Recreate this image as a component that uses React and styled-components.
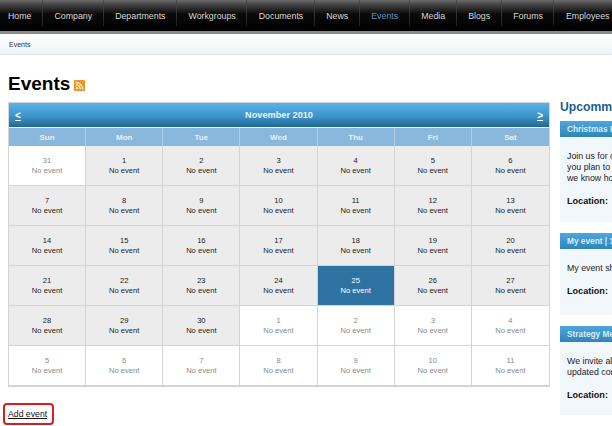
import React from 'react';
import styled, { createGlobalStyle } from 'styled-components';

const GlobalStyle = createGlobalStyle`
  html, body {
    margin: 0;
    padding: 0;
    width: 612px;
    height: 426px;
    overflow: hidden;
    background: #fff;
    font-family: "Liberation Sans", Arial, sans-serif;
  }
`;

const Page = styled.div`
  width: 612px;
  height: 426px;
  overflow: hidden;
`;

const NavBar = styled.nav`
  display: flex;
  height: 31px;
  background: linear-gradient(#6a6a6a 0, #3a3a3a 6px, #0a0a0a 14px, #000 100%);
  border-bottom: 3px solid #8c8c8c;
  white-space: nowrap;
`;

const NavItem = styled.a`
  display: flex;
  align-items: center;
  height: 31px;
  padding: 0 11.5px;
  font-size: 8.8px;
  color: ${(p) => (p.$active ? '#5f8fc4' : '#d8d8d8')};
  background: linear-gradient(#4c4c4c, #1c1c1c) right top / 1px 26px no-repeat;
  flex: none;

  &:first-child {
    padding-left: 8px;
  }
`;

const Breadcrumb = styled.div`
  box-sizing: border-box;
  height: 20px;
  margin-top: 1px;
  padding: 0 9px;
  display: flex;
  align-items: center;
  font-size: 7px;
  color: #333;
  background: linear-gradient(#fff, #eef2f4);
  border-bottom: 1px solid #dbe6ec;
`;

const Main = styled.div`
  display: flex;
  gap: 10px;
  padding: 0 0 0 8px;
`;

const Content = styled.div`
  flex: none;
  width: 542px;
`;

const Title = styled.h1`
  display: flex;
  align-items: center;
  gap: 4px;
  margin: 15px 0 4px;
  height: 28px;
  font-size: 19px;
  font-weight: bold;
  color: #000;
`;

const Calendar = styled.div`
  box-sizing: border-box;
  width: 542px;
  border: 1px solid #d4d4d4;
`;

const MonthBar = styled.div`
  display: flex;
  align-items: center;
  justify-content: space-between;
  height: 24px;
  padding: 0 6px;
  font-size: 9.2px;
  font-weight: bold;
  color: #e8f3fa;
  background: linear-gradient(#5cb2e6 0, #3d94c8 55%, #2a78a8 85%, #1f6690 100%);
`;

const Arrow = styled.a`
  font-size: 10px;
  text-decoration: underline;
  color: #fff;
`;

const Grid = styled.div`
  display: grid;
  grid-template-columns: repeat(7, 1fr);
`;

const DayName = styled.div`
  box-sizing: border-box;
  height: 18px;
  margin-top: 1px;
  display: flex;
  align-items: center;
  justify-content: center;
  font-size: 8px;
  font-weight: bold;
  color: #e4eff7;
  background: #8ab8dc;
  border-right: 1px solid #b4d0e6;

  &:nth-child(7) {
    border-right: none;
  }
`;

const Cell = styled.div`
  box-sizing: border-box;
  height: 40px;
  padding-top: 1px;
  display: flex;
  flex-direction: column;
  align-items: center;
  justify-content: center;
  line-height: 10px;
  font-size: 7.6px;
  border-bottom: 1px solid #d4d4d4;
  border-right: 1px solid #d4d4d4;
  background: ${(p) => (p.$today ? '#2f73a3' : p.$other ? '#fff' : '#ececec')};
  color: ${(p) => (p.$today ? '#fff' : p.$other ? '#8a8a8a' : '#1a1a1a')};

  &:nth-child(7n) {
    border-right: none;
  }
`;

const AddRow = styled.div`
  margin-top: 20px;
  line-height: 10px;
`;

const AddLink = styled.a`
  position: relative;
  font-size: 8.7px;
  color: #111;
  text-decoration: underline;

  &::after {
    content: '';
    position: absolute;
    left: -5px;
    right: -7px;
    top: -6px;
    bottom: -6px;
    border: 2px solid #dc1c24;
    border-radius: 4px;
  }
`;

const Sidebar = styled.aside`
  flex: none;
  width: 280px;
  padding-top: 45px;
`;

const SideTitle = styled.h2`
  margin: 0 0 7px;
  height: 14px;
  line-height: 14px;
  font-size: 12.2px;
  font-weight: bold;
  color: #1c5f8c;
  white-space: nowrap;
`;

const EventCard = styled.section`
  margin-bottom: 11px;
  background: #f2f7fb;
`;

const EventHead = styled.div`
  display: flex;
  align-items: center;
  height: 16px;
  padding: 0 7px;
  font-size: 8.3px;
  font-weight: bold;
  color: #d9ecf8;
  white-space: nowrap;
  background: linear-gradient(#4ea6dc, #2f85ba);
`;

const EventBody = styled.div`
  box-sizing: border-box;
  height: ${(p) => p.$h}px;
  padding: 14px 7px 0;
  font-size: 8.8px;
  line-height: 11px;
  color: #222;
  white-space: nowrap;
`;

const Location = styled.div`
  margin-top: 12px;
  font-size: 9.1px;
  font-weight: bold;
  color: #111;
`;

const days = ['Sun', 'Mon', 'Tue', 'Wed', 'Thu', 'Fri', 'Sat'];

const cells = [
  31, 1, 2, 3, 4, 5, 6,
  7, 8, 9, 10, 11, 12, 13,
  14, 15, 16, 17, 18, 19, 20,
  21, 22, 23, 24, 25, 26, 27,
  28, 29, 30, 1, 2, 3, 4,
  5, 6, 7, 8, 9, 10, 11,
];

const TODAY_INDEX = 25;

const RssIcon = () => (
  <svg width="11" height="11" viewBox="0 0 12 12" style={{ marginTop: 3 }}>
    <rect width="12" height="12" rx="1" fill="#f7941d" />
    <circle cx="3.2" cy="8.8" r="1.2" fill="#fff" />
    <path d="M2 5.2a4.8 4.8 0 0 1 4.8 4.8M2 2.6A7.4 7.4 0 0 1 9.4 10" fill="none" stroke="#fff" strokeWidth="1.4" />
  </svg>
);

function App() {
  return (
    <Page>
      <GlobalStyle />
      <NavBar>
        {['Home', 'Company', 'Departments', 'Workgroups', 'Documents', 'News', 'Events', 'Media', 'Blogs', 'Forums', 'Employees'].map((name) => (
          <NavItem key={name} $active={name === 'Events'}>{name}</NavItem>
        ))}
      </NavBar>
      <Breadcrumb>Events</Breadcrumb>
      <Main>
        <Content>
          <Title>
            Events
            <RssIcon />
          </Title>
          <Calendar>
            <MonthBar>
              <Arrow>&lt;</Arrow>
              <span>November 2010</span>
              <Arrow>&gt;</Arrow>
            </MonthBar>
            <Grid>
              {days.map((d) => <DayName key={d}>{d}</DayName>)}
            </Grid>
            <Grid>
              {cells.map((n, i) => (
                <Cell key={i} $other={i === 0 || i > 30} $today={i === TODAY_INDEX}>
                  <span>{n}</span>
                  <span>No event</span>
                </Cell>
              ))}
            </Grid>
          </Calendar>
          <AddRow>
            <AddLink>Add event</AddLink>
          </AddRow>
        </Content>
        <Sidebar>
          <SideTitle>Upcomming events</SideTitle>
          <EventCard>
            <EventHead>Christmas Party</EventHead>
            <EventBody $h={85}>
              Join us for our Christmas party<br />
              you plan to attend so that<br />
              we know how many to expect
              <Location>Location:</Location>
            </EventBody>
          </EventCard>
          <EventCard>
            <EventHead>My event | 12/15/2010</EventHead>
            <EventBody $h={66}>
              My event short description
              <Location>Location:</Location>
            </EventBody>
          </EventCard>
          <EventCard>
            <EventHead>Strategy Meeting</EventHead>
            <EventBody $h={73}>
              We invite all employees to see the<br />
              updated company strategy
              <Location>Location:</Location>
            </EventBody>
          </EventCard>
        </Sidebar>
      </Main>
    </Page>
  );
}

export default App;
